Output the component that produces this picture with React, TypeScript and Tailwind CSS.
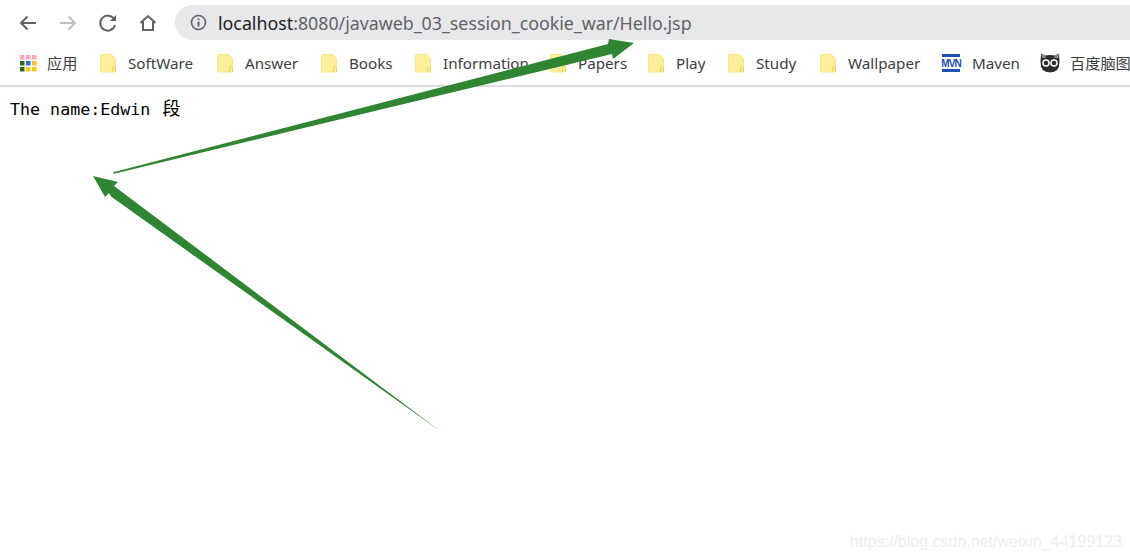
const ui = '"Noto Sans", "Noto Sans CJK SC", sans-serif';

function Folder() {
  return (
    <svg width="16" height="19" viewBox="0 0 16 19" className="shrink-0">
      <path d="M1.5 0.5H11.5L15.5 4.5V16.5Q15.5 18 14 18H1.5Q0.5 18 0.5 17V1.5Q0.5 0.5 1.5 0.5Z" fill="#fdee9c" stroke="#fbe584" />
      <path d="M12.5 18V14.5Q12.5 13 14 13Q15.5 13 15.5 14.5V18" fill="none" stroke="#f3cf52" strokeWidth="1" />
    </svg>
  );
}

function Apps() {
  const c = ['#f9a8b8', '#f9a8b8', '#f9a8b8', '#2f6b1f', '#2f6fd0', '#f8c22c', '#2f6b1f', '#fbc71c', '#fbc71c'];
  return (
    <svg width="17" height="17" viewBox="0 0 17 17" className="shrink-0">
      {c.map((f, i) => (
        <rect key={i} x={(i % 3) * 6} y={Math.floor(i / 3) * 6} width="4.500" height="4.500" fill={f} />
      ))}
    </svg>
  );
}

function Mvn() {
  return (
    <div className="flex h-[18px] w-[18px] shrink-0 flex-col items-center justify-between">
      <div className="h-[3px] w-full bg-[#1f4fb0]" />
      <span className="text-[10px] leading-[9px] font-bold tracking-[-0.9px] text-[#1f4fb0]" style={{ fontFamily: '"Liberation Sans", sans-serif' }}>MVN</span>
      <div className="h-[3px] w-full bg-[#1f4fb0]" />
    </div>
  );
}

function Owl() {
  return (
    <svg width="20" height="20" viewBox="0 0 20 20" className="shrink-0">
      <path d="M1 0.500L5 2.500Q10 1.500 15 2.500L19 0.500L19.500 9Q19.500 19.500 10 19.500Q0.500 19.500 0.500 9Z" fill="#2d2d2d" />
      <path d="M1 0.500L5 2.500L6 5H2ZM19 0.500L15 2.500L14 5H18.500Z" fill="#8a8a8a" />
      <circle cx="6" cy="10" r="3.800" fill="#fff" />
      <circle cx="14" cy="10" r="3.800" fill="#fff" />
      <circle cx="6" cy="10" r="2.300" fill="#2d2d2d" />
      <circle cx="14" cy="10" r="2.300" fill="#2d2d2d" />
    </svg>
  );
}

function Mark({ icon, label, className }: { icon: React.ReactNode; label: string; className: string }) {
  return (
    <div className={`flex shrink-0 items-center ${className}`}>
      {icon}
      <span className="whitespace-nowrap text-[15.2px] leading-5 text-[#3c4043]">{label}</span>
    </div>
  );
}

export default function App() {
  return (
    <div className="relative h-[560px] w-[1130px] overflow-hidden bg-white" style={{ fontFamily: ui }}>
      <div className="flex h-10 items-end">
        <div className="flex h-[35px] w-[175px] shrink-0 items-center pl-[18px]">
          <svg width="20" height="20" viewBox="0 0 20 20" fill="none" stroke="#5f6368" strokeWidth="2" className="mr-[20px] shrink-0">
            <path d="M18 10H3M9.500 3.500L3 10L9.500 16.500" />
          </svg>
          <svg width="20" height="20" viewBox="0 0 20 20" fill="none" stroke="#bdc1c6" strokeWidth="2" className="mr-[20px] shrink-0">
            <path d="M2 10H17M10.500 3.500L17 10L10.500 16.500" />
          </svg>
          <svg width="20" height="20" viewBox="0 0 20 20" fill="none" stroke="#5f6368" strokeWidth="2" className="mr-[20px] shrink-0">
            <path d="M16 6A7.500 7.500 0 1 0 17 12" />
            <path d="M18 2V8H12Z" fill="#5f6368" stroke="none" />
          </svg>
          <svg width="20" height="20" viewBox="0 0 20 20" fill="none" stroke="#5f6368" strokeWidth="2" className="shrink-0">
            <path d="M2.500 10L10 3L17.500 10M5 8V17H15V8" />
          </svg>
        </div>
        <div className="flex h-[35px] flex-1 items-center rounded-l-[18px] bg-[#e7e8ea] pl-[15px]">
          <svg width="17" height="17" viewBox="0 0 17 17" fill="none" stroke="#5f6368" strokeWidth="1.600" className="mr-[11px] shrink-0">
            <circle cx="8.500" cy="8.500" r="7" />
            <path d="M8.500 7.500V12.500M8.500 4.500V6" strokeWidth="2" />
          </svg>
          <span className="whitespace-nowrap text-[17.8px] leading-6 text-[#5f6368]">
            <span className="text-[#202124]">localhost</span>:8080/javaweb_03_session_cookie_war/Hello.jsp
          </span>
        </div>
      </div>

      <div className="flex h-[45px] items-center pl-5 pt-[1px]">
        <Mark className="w-[80px] gap-[10px]" icon={<Apps />} label="应用" />
        <Mark className="w-[117px] gap-3" icon={<Folder />} label="SoftWare" />
        <Mark className="w-[104px] gap-3" icon={<Folder />} label="Answer" />
        <Mark className="w-[94px] gap-3" icon={<Folder />} label="Books" />
        <Mark className="w-[135px] gap-3" icon={<Folder />} label="Information" />
        <Mark className="w-[98px] gap-3" icon={<Folder />} label="Papers" />
        <Mark className="w-[80px] gap-3" icon={<Folder />} label="Play" />
        <Mark className="w-[92px] gap-3" icon={<Folder />} label="Study" />
        <Mark className="w-[122px] gap-3" icon={<Folder />} label="Wallpaper" />
        <Mark className="w-[98px] gap-3" icon={<Mvn />} label="Maven" />
        <Mark className="gap-[10px]" icon={<Owl />} label="百度脑图" />
      </div>
      <div className="h-[2px] bg-[#dcdce0]" />

      <div className="pt-3 pl-[10px] text-[16.67px] leading-5 text-black" style={{ fontFamily: '"DejaVu Sans Mono", "Noto Sans CJK SC", monospace' }}>
        The name:Edwin <span className="ml-[2px] text-[18px]">段</span>
      </div>

      <svg className="pointer-events-none absolute top-0 left-0" width="1130" height="560" viewBox="0 0 1130 560">
        <path d="M113 172.300L608 44L609 39L634 43L613 59L612 54L114 173.700Z" fill="#2f8532" />
        <path d="M440 431L114 186L118 182L93 176L105 197L109 193L111 196.500Z" fill="#2f8532" />
      </svg>

      <div className="absolute right-[8px] bottom-[8px] whitespace-nowrap text-[16px] leading-5 text-[#eeeeee]" style={{ fontFamily: '"Liberation Sans", sans-serif' }}>
        https://blog.csdn.net/weixin_44199123
      </div>
    </div>
  );
}
